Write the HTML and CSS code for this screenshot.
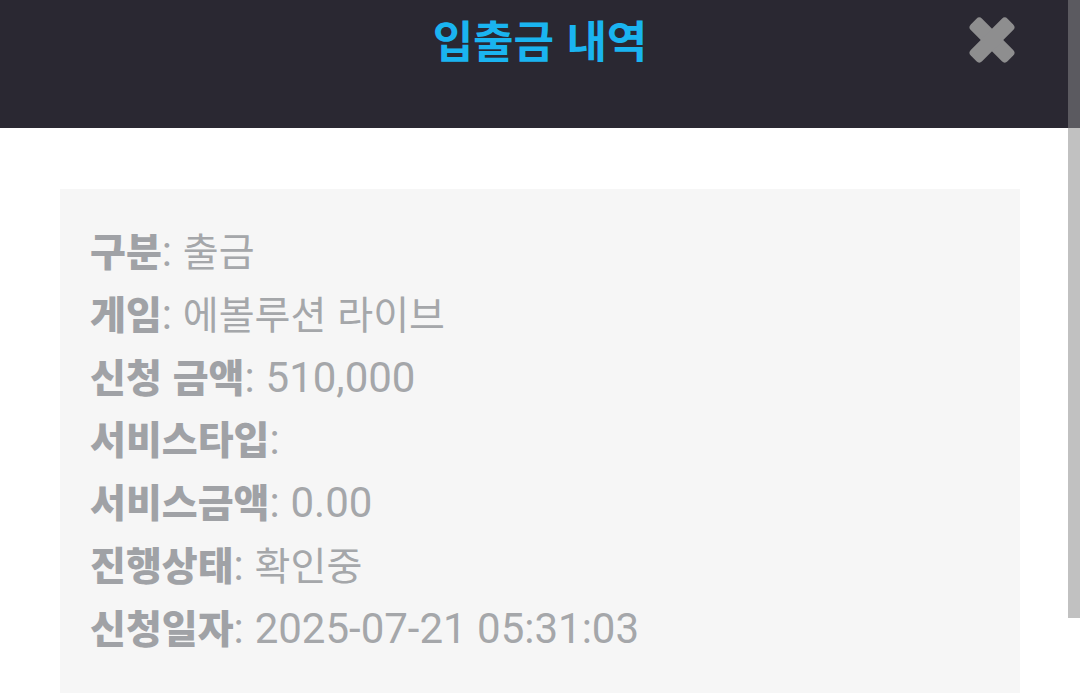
FILE: index.html
```html
<!DOCTYPE html>
<html lang="ko">
<head>
<meta charset="utf-8">
<title>입출금 내역</title>
<link rel="stylesheet" href="styles.css">
</head>
<body>
<header class="top">
  <h1 class="title">입출금 내역</h1>
  <button class="close" aria-label="닫기">
    <svg width="48" height="48" viewBox="0 0 48 48">
      <rect x="-2" y="16" width="52" height="16" rx="4" transform="rotate(45 24 24)" fill="#8e8e8f"/>
      <rect x="-2" y="16" width="52" height="16" rx="4" transform="rotate(-45 24 24)" fill="#8e8e8f"/>
    </svg>
  </button>
</header>
<main class="content">
  <section class="card">
    <p class="row"><b class="label">구분</b><span class="sep">:</span> 출금</p>
    <p class="row"><b class="label">게임</b><span class="sep">:</span> 에볼루션 라이브</p>
    <p class="row"><b class="label">신청 금액</b><span class="sep">:</span> <span class="num">510,000</span></p>
    <p class="row"><b class="label">서비스타입</b><span class="sep">:</span></p>
    <p class="row"><b class="label">서비스금액</b><span class="sep">:</span> <span class="num">0.00</span></p>
    <p class="row"><b class="label">진행상태</b><span class="sep">:</span> 확인중</p>
    <p class="row"><b class="label">신청일자</b><span class="sep">:</span> <span class="num">2025-07-21 05:31:03</span></p>
  </section>
</main>
<div class="scrollbar"></div>
</body>
</html>
```
FILE: styles.css
```css
html, body {
  margin: 0;
  padding: 0;
  background: #ffffff;
  overflow: hidden;
}
body {
  font-family: Roboto, "Noto Sans CJK KR", sans-serif;
  width: 1080px;
  height: 693px;
}
.top {
  height: 128px;
  background: #2a2832;
  display: flex;
  justify-content: center;
  align-items: flex-start;
  position: relative;
}
.title {
  margin: 0;
  padding-top: 8px;
  font-family: "Noto Sans CJK KR", sans-serif;
  font-weight: 700;
  font-size: 44px;
  line-height: 62px;
  color: #1ab4f0;
}
.close {
  position: absolute;
  left: 968px;
  top: 16px;
  width: 48px;
  height: 48px;
  padding: 0;
  border: 0;
  background: none;
  display: block;
}
.close svg { display: block; }
.content {
  padding: 61px 60px 0 60px;
}
.card {
  background: #f6f6f6;
  padding: 29px 30px 35px 30px;
}
.row {
  margin: 0;
  height: 62.8px;
  line-height: 62.8px;
  font-size: 39px;
  color: #a5a7aa;
  white-space: nowrap;
  font-family: "Noto Sans CJK KR", sans-serif;
}
.label {
  font-weight: 900;
  color: #a0a2a6;
}
.sep {
  font-family: Roboto, sans-serif;
  font-size: 42px;
}
.num {
  font-family: Roboto, sans-serif;
  font-size: 42px;
}
.scrollbar {
  position: fixed;
  right: 0;
  top: 0;
  width: 12px;
  height: 618px;
  background: linear-gradient(#5b5a60 0, #5b5a60 128px, #c1c1c1 128px, #c1c1c1 100%);
}
```
